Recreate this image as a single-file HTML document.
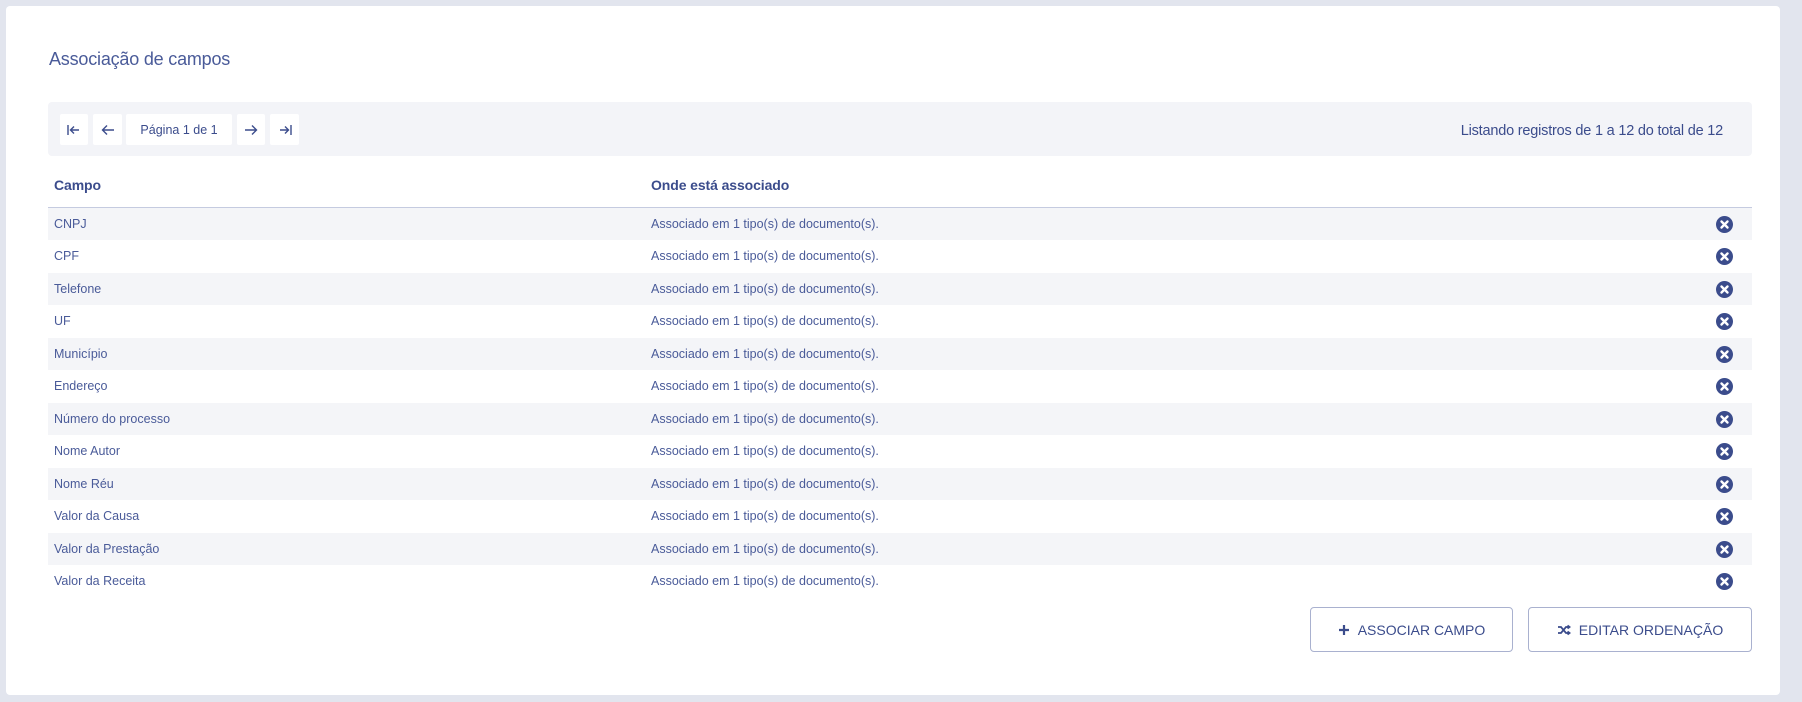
<!DOCTYPE html>
<html><head><meta charset="utf-8"><style>
*{box-sizing:border-box;margin:0;padding:0}
body{width:1802px;height:702px;background:#e2e5ee;font-family:"Liberation Sans",sans-serif;color:#3b4c8c;position:relative;overflow:hidden}
.card{position:absolute;left:6px;top:6px;width:1774px;height:689px;background:#fff;border-radius:4px}
.title{position:absolute;left:49px;top:49px;font-size:18px;color:#4a5b99;font-weight:normal;letter-spacing:-0.2px}
.bar{position:absolute;left:48px;top:102px;width:1704px;height:54px;background:#f3f4f8;border-radius:4px}
.pb{position:absolute;top:12px;height:31px;background:#fff;border-radius:2px;font-size:12.5px;display:flex;align-items:center;justify-content:center;color:#3b4c8c}
.info{position:absolute;right:29px;top:21px;font-size:14.5px;color:#3b4c8c;letter-spacing:-0.2px}
.hdr{position:absolute;top:177px;font-size:14px;font-weight:bold;color:#3b4c8c;letter-spacing:-0.1px}
.line{position:absolute;left:48px;top:207px;width:1704px;height:1px;background:#c5cbe0}
.row{position:absolute;left:48px;width:1704px;height:32.4px;font-size:12.5px;color:#4a5b99}
.row.a{background:#f4f5f8}
.row span{position:absolute;top:9px}
.row svg{position:absolute;left:1668px;top:8px}
.btn{position:absolute;top:607px;height:45px;border:1px solid #a9b1cf;border-radius:4px;display:flex;align-items:center;justify-content:center;font-size:14px;color:#3b4c8c;background:#fff;gap:8px}
</style></head><body>
<div class="card"></div>
<div class="title">Associação de campos</div>
<div class="bar">
<div class="pb" style="left:12px;width:28px"><svg width="14" height="12" viewBox="0 0 14 12" fill="none" stroke="#3b4c8c" stroke-width="1.4"><path d="M1 1v10M12 6H4M7 2.5L3.5 6 7 9.5"/></svg></div>
<div class="pb" style="left:45px;width:29px"><svg width="14" height="12" viewBox="0 0 14 12" fill="none" stroke="#3b4c8c" stroke-width="1.4"><path d="M13 6H2M6 1.5L1.5 6 6 10.5"/></svg></div>
<div class="pb" style="left:78px;width:106px">Página 1 de 1</div>
<div class="pb" style="left:189px;width:28px"><svg width="14" height="12" viewBox="0 0 14 12" fill="none" stroke="#3b4c8c" stroke-width="1.4"><path d="M1 6h11M8 1.5L12.5 6 8 10.5"/></svg></div>
<div class="pb" style="left:222px;width:29px"><svg width="14" height="12" viewBox="0 0 14 12" fill="none" stroke="#3b4c8c" stroke-width="1.4"><path d="M13 1v10M2 6h8M7 2.5L10.5 6 7 9.5"/></svg></div>
<div class="info">Listando registros de 1 a 12 do total de 12</div>
</div>
<div class="hdr" style="left:54px">Campo</div>
<div class="hdr" style="left:651px">Onde está associado</div>
<div class="line"></div>
<div id="rows"></div>
<div class="btn" style="left:1310px;width:203px"><svg width="12" height="12" viewBox="0 0 12 12"><path d="M6 1v10M1 6h10" stroke="#3b4c8c" stroke-width="2.2"/></svg>ASSOCIAR CAMPO</div>
<div class="btn" style="left:1528px;width:224px"><svg width="14" height="12" viewBox="0 0 14 12" fill="none" stroke="#3b4c8c" stroke-width="1.8"><path d="M1 3h3l5 6h3M1 9h3l5-6h3M10.5 1.5L12.5 3 10.5 4.5M10.5 7.5L12.5 9 10.5 10.5"/></svg>EDITAR ORDENAÇÃO</div>
<script>
var n=["CNPJ","CPF","Telefone","UF","Município","Endereço","Número do processo","Nome Autor","Nome Réu","Valor da Causa","Valor da Prestação","Valor da Receita"],h="";
n.forEach(function(t,i){h+='<div class="row'+(i%2==0?' a':'')+'" style="top:'+(208+i*32.45)+'px"><span style="left:6px">'+t+'</span><span style="left:603px">Associado em 1 tipo(s) de documento(s).</span><svg width="17" height="17" viewBox="0 0 17 17"><circle cx="8.5" cy="8.5" r="8.5" fill="#3b4c8c"/><path d="M5.5 5.5l6 6M11.5 5.5l-6 6" stroke="#fff" stroke-width="2.4" stroke-linecap="round"/></svg></div>'});
document.getElementById("rows").innerHTML=h;
</script>
</body></html>
